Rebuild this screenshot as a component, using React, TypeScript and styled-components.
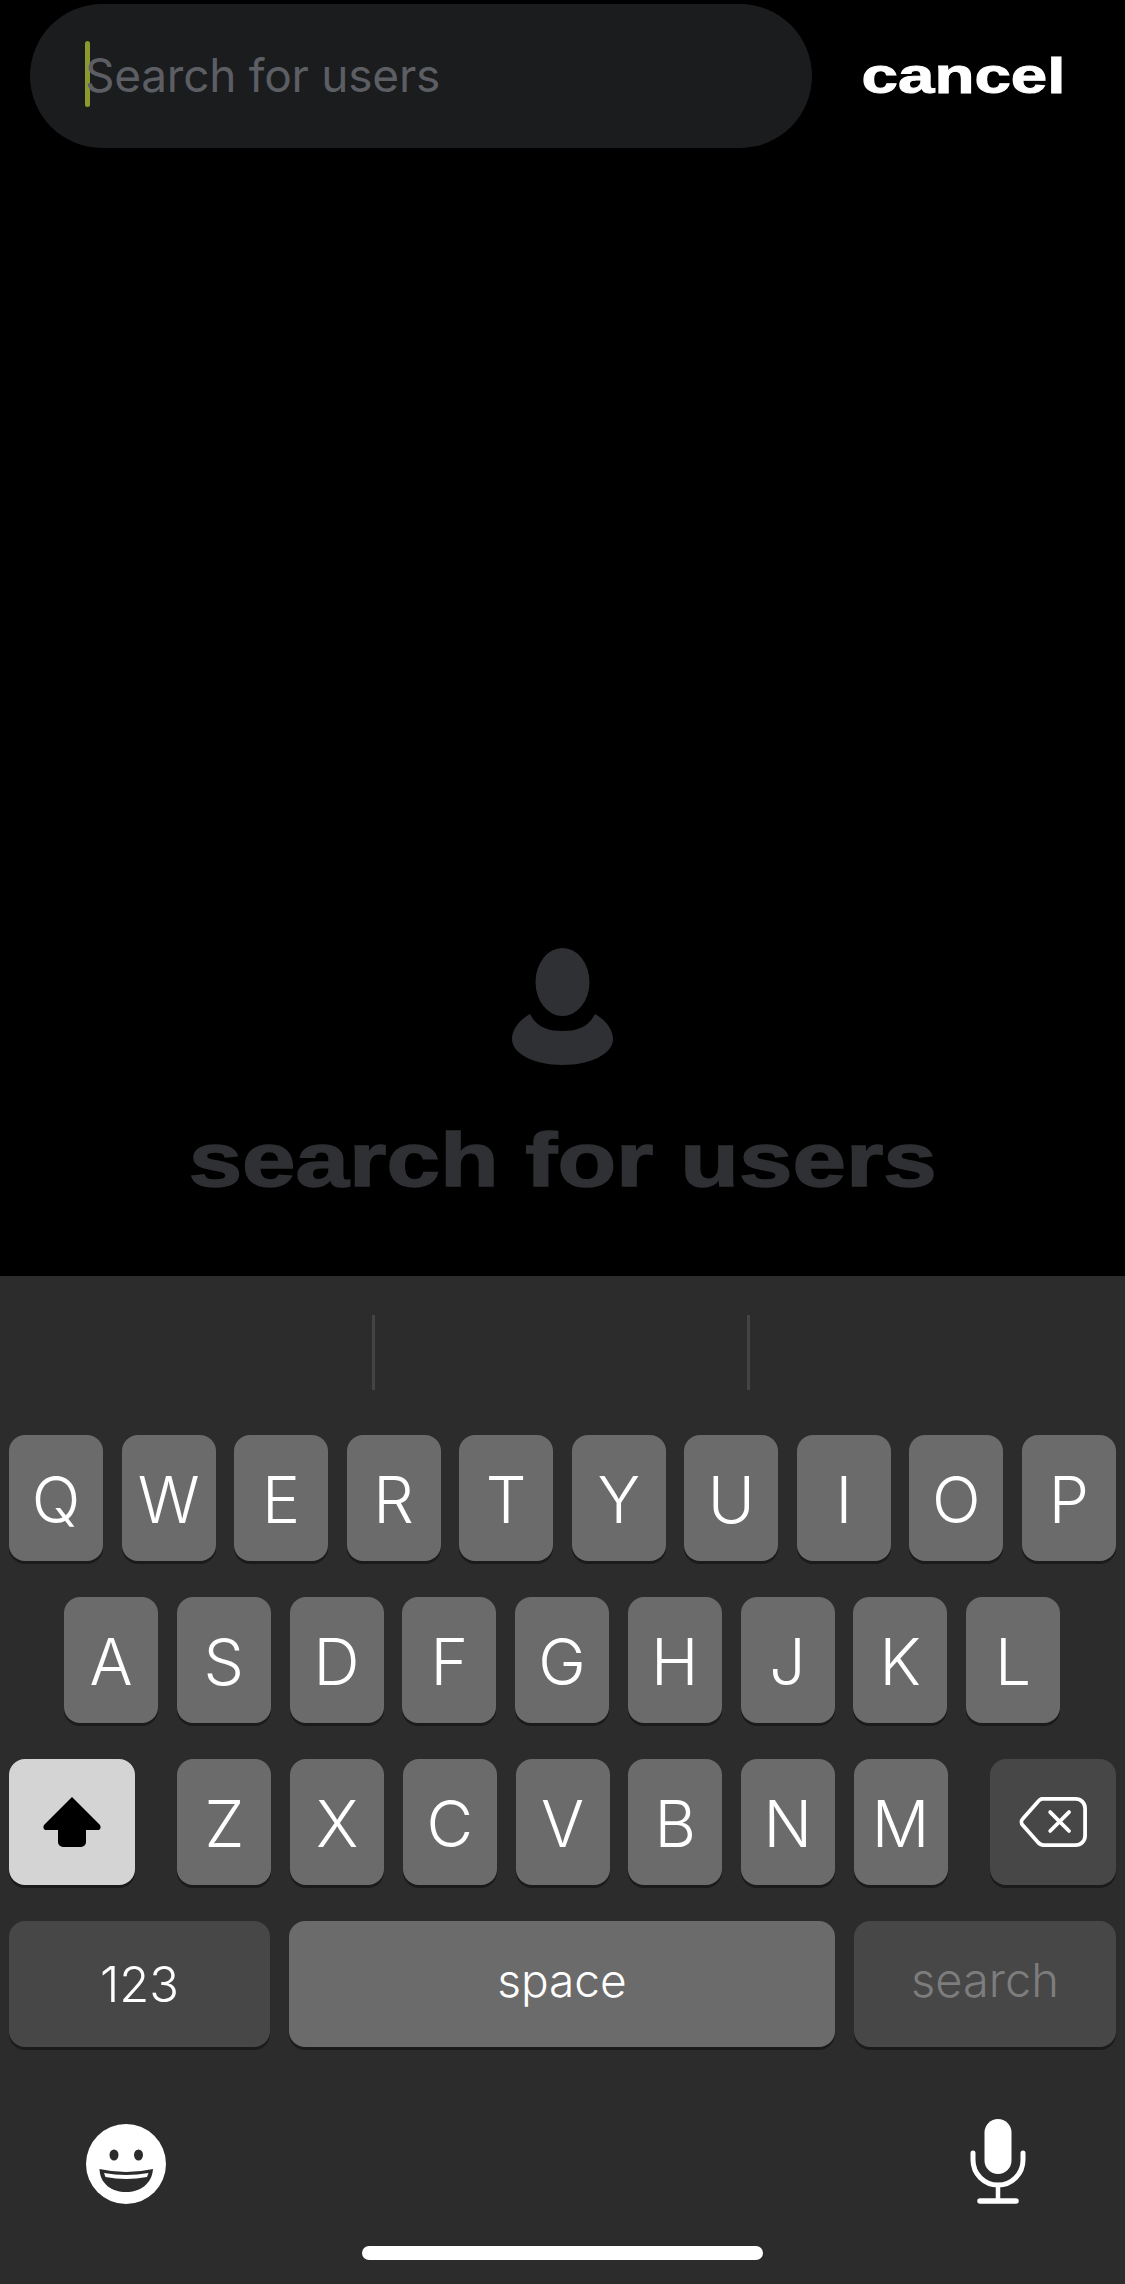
import React from 'react';
import styled, { createGlobalStyle } from 'styled-components';

const Global = createGlobalStyle`
  html, body {
    margin: 0;
    padding: 0;
    background: #000;
  }
  * {
    box-sizing: border-box;
  }
`;

const Screen = styled.div`
  width: 1125px;
  height: 2284px;
  display: flex;
  flex-direction: column;
  overflow: hidden;
  background: #000;
  font-family: 'Inter', 'Liberation Sans', sans-serif;
`;

const Main = styled.main`
  flex: 1;
  display: flex;
  flex-direction: column;
  padding-top: 4px;
`;

const SearchRow = styled.div`
  display: flex;
  align-items: center;
  padding-left: 30px;
`;

const SearchBar = styled.div`
  width: 782px;
  height: 144px;
  display: flex;
  align-items: center;
  padding-left: 55px;
  border-radius: 72px;
  background: #1a1c1e;
`;

const Caret = styled.span`
  width: 5px;
  height: 66px;
  margin-top: -4px;
  border-radius: 3px;
  background: #8b9a2e;
`;

const Placeholder = styled.span`
  margin-left: -5px;
  margin-top: -2px;
  font-size: 46px;
  font-weight: 400;
  letter-spacing: -0.25px;
  color: #5c5e64;
`;

const Cancel = styled.button`
  margin-left: 51px;
  margin-top: -1px;
  width: 201px;
  padding: 0;
  border: 0;
  background: none;
  font-family: 'Liberation Sans', Arial, sans-serif;
  font-size: 50px;
  font-weight: 700;
  color: #fff;
  white-space: nowrap;
  -webkit-text-stroke: 1px #fff;
  transform: scaleX(1.31);
`;

const EmptyState = styled.section`
  display: flex;
  flex-direction: column;
  align-items: center;
  padding-top: 800px;
`;

const EmptyTitle = styled.h2`
  margin: 53px 0 0;
  font-family: 'Liberation Sans', Arial, sans-serif;
  font-size: 76px;
  line-height: 84px;
  font-weight: 700;
  color: #2f3033;
  white-space: nowrap;
  -webkit-text-stroke: 1.5px #2f3033;
  transform: scaleX(1.265);
`;

const Keyboard = styled.section`
  height: 1008px;
  display: flex;
  flex-direction: column;
  background: #2c2c2c;
`;

const Suggestions = styled.div`
  height: 159px;
  padding: 0 3px 6px 0;
  display: flex;
  align-items: center;
  justify-content: center;
  gap: 372px;
`;

const Divider = styled.span`
  width: 3px;
  height: 75px;
  background: #444;
`;

const Rows = styled.div`
  display: flex;
  flex-direction: column;
  gap: 36px;
  padding: 0 9px;
`;

const Row = styled.div<{ $left?: number; $right?: number }>`
  display: flex;
  justify-content: space-between;
  padding: 0 ${(p) => p.$right ?? 0}px 0 ${(p) => p.$left ?? 0}px;
`;

const LetterGroup = styled.div`
  display: flex;
  gap: 18.7px;
`;

const Key = styled.div<{ $w?: number; $tone?: 'letter' | 'dark' | 'light' }>`
  width: ${(p) => p.$w ?? 94}px;
  height: 126px;
  display: flex;
  align-items: center;
  justify-content: center;
  padding-top: 2px;
  border-radius: 16px;
  background: ${(p) => (p.$tone === 'dark' ? '#474747' : p.$tone === 'light' ? '#d4d4d4' : '#6b6b6b')};
  box-shadow: 0 3px 0 #1b1b1b;
  font-size: 64px;
  font-weight: 300;
  color: #fff;
`;

const WordKey = styled(Key)<{ $size: number; $lift?: number; $dim?: boolean }>`
  padding: 0 0 ${(p) => p.$lift ?? 0}px;
  font-size: ${(p) => p.$size}px;
  font-weight: 350;
  color: ${(p) => (p.$dim ? '#7d7d7d' : '#fff')};
`;

const IconKey = styled(Key)`
  padding: 0;
`;

const BottomBar = styled.div`
  display: flex;
  align-items: flex-end;
  justify-content: space-between;
  padding: 72px 99px 0 86px;
`;

const HomeBar = styled.div`
  width: 401px;
  height: 14px;
  margin: 42px auto 0;
  border-radius: 7px;
  background: #fff;
`;

const PersonIcon = () => (
  <svg width="101" height="117" viewBox="0 0 101 117" fill="#2f3033">
    <ellipse cx="50.5" cy="34" rx="27" ry="34" />
    <path d="M18 66 C25 80 37 83 50.5 83 C64 83 76 80 83 66 C94 72 101 82 101 91 C101 106 78 117 50.5 117 C23 117 0 106 0 91 C0 82 7 72 18 66 Z" />
  </svg>
);

const ShiftIcon = () => (
  <svg width="58" height="50" viewBox="0 0 58 50" fill="#000">
    <path d="M29 0 L57 28 Q59 33 54 33 H43 V45 A5 5 0 0 1 38 50 H20 A5 5 0 0 1 15 45 V33 H4 Q-1 33 1 28 Z" />
  </svg>
);

const DeleteIcon = () => (
  <svg width="68" height="50" viewBox="0 0 72 53" fill="none" stroke="#fff" strokeWidth="4" strokeLinejoin="round" strokeLinecap="round">
    <path d="M24 2 H60 A10 10 0 0 1 70 12 V41 A10 10 0 0 1 60 51 H26 A8 8 0 0 1 20 48 L4 30 A5 5 0 0 1 4 23 L20 5 A8 8 0 0 1 24 2 Z" />
    <path d="M33 16 L53 36 M53 16 L33 36" />
  </svg>
);

const EmojiIcon = () => (
  <svg width="80" height="80" viewBox="0 0 80 80">
    <circle cx="40" cy="40" r="40" fill="#fff" />
    <ellipse cx="28" cy="31" rx="4.5" ry="5.5" fill="#2c2c2c" />
    <ellipse cx="52.5" cy="31" rx="4.5" ry="5.5" fill="#2c2c2c" />
    <path d="M13.5 45 Q40 51 67 45 C66 60 54 68 40 68 C26 68 14 60 13.5 45 Z" fill="#2c2c2c" />
    <path d="M18 49 Q40 53 62.5 49 L61 53 Q40 57 19.5 53 Z" fill="#fff" />
  </svg>
);

const MicIcon = () => (
  <svg width="56" height="85" viewBox="0 0 56 85" fill="none" stroke="#fff" strokeLinecap="round">
    <rect x="14.5" y="0" width="27" height="55" rx="13.5" fill="#fff" stroke="none" />
    <path d="M3 34 V41 A25 25 0 0 0 53 41 V34" strokeWidth="5" />
    <path d="M28 66 V82" strokeWidth="4.5" />
    <path d="M10 82 H46" strokeWidth="5.5" />
  </svg>
);

const Letters = ({ keys }: { keys: string }) => (
  <>
    {keys.split('').map((k) => (
      <Key key={k}>{k}</Key>
    ))}
  </>
);

export default function App() {
  return (
    <Screen>
      <Global />
      <Main>
        <SearchRow>
          <SearchBar>
            <Caret />
            <Placeholder>Search for users</Placeholder>
          </SearchBar>
          <Cancel>cancel</Cancel>
        </SearchRow>
        <EmptyState>
          <PersonIcon />
          <EmptyTitle>search for users</EmptyTitle>
        </EmptyState>
      </Main>
      <Keyboard>
        <Suggestions>
          <Divider />
          <Divider />
        </Suggestions>
        <Rows>
          <Row>
            <Letters keys="QWERTYUIOP" />
          </Row>
          <Row $left={55} $right={56}>
            <Letters keys="ASDFGHJKL" />
          </Row>
          <Row>
            <IconKey $w={126} $tone="light">
              <ShiftIcon />
            </IconKey>
            <LetterGroup>
              <Letters keys="ZXCVBNM" />
            </LetterGroup>
            <IconKey $w={126} $tone="dark">
              <DeleteIcon />
            </IconKey>
          </Row>
          <Row>
            <WordKey $w={261} $tone="dark" $size={49}>123</WordKey>
            <WordKey $w={546} $size={46} $lift={9}>space</WordKey>
            <WordKey $w={262} $tone="dark" $size={47} $lift={10} $dim>search</WordKey>
          </Row>
        </Rows>
        <BottomBar>
          <EmojiIcon />
          <MicIcon />
        </BottomBar>
        <HomeBar />
      </Keyboard>
    </Screen>
  );
}
